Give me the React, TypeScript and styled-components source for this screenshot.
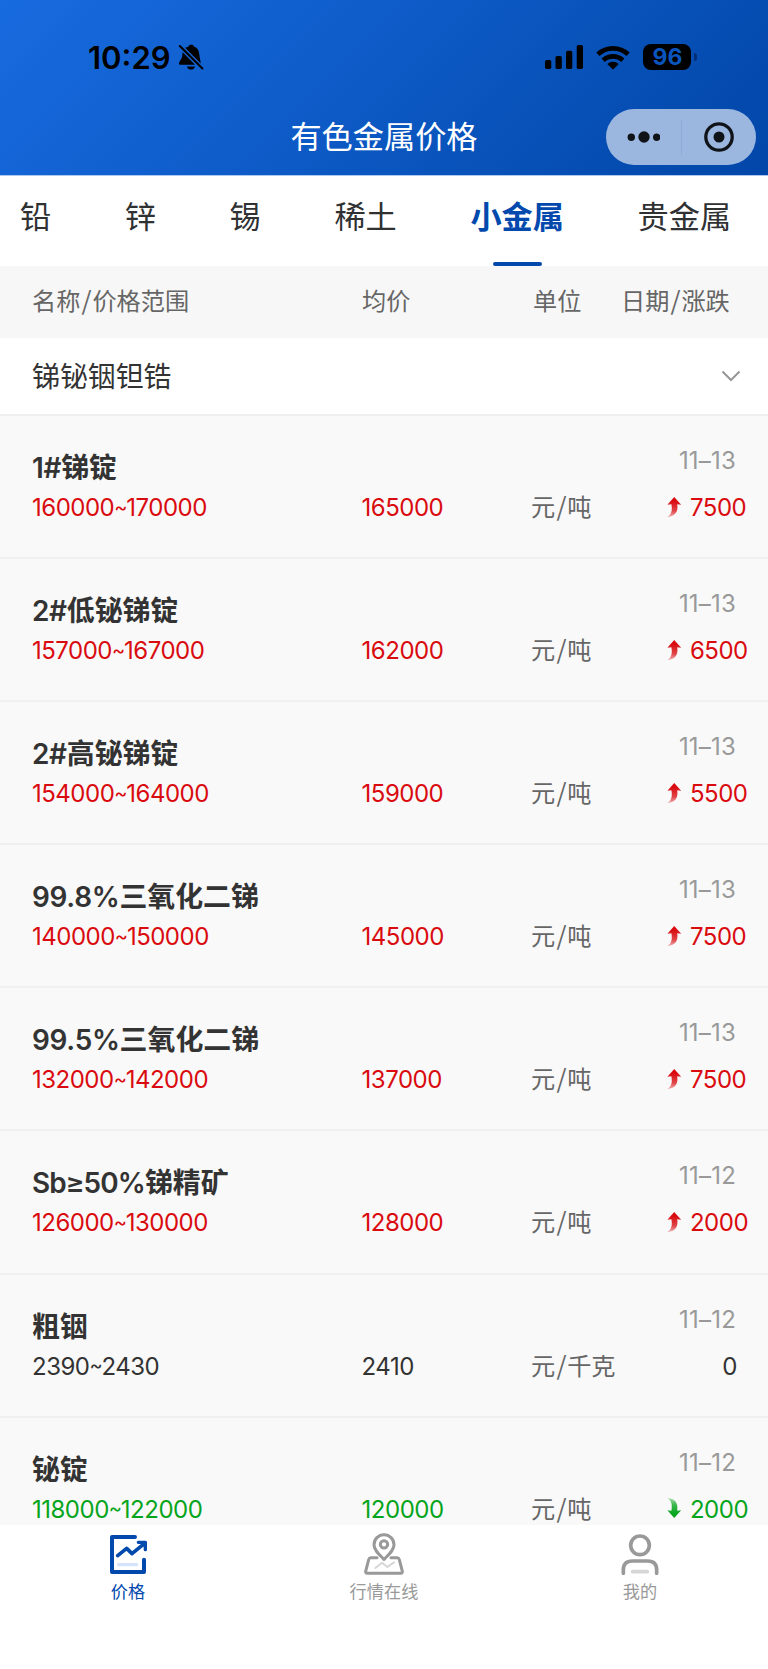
import React from "react";
import styled, { createGlobalStyle } from "styled-components";

const Global = createGlobalStyle`
  * { box-sizing: border-box; }
  html, body { margin: 0; background: #fff; }
  body {
    font-family: Inter, "Noto Sans CJK SC", sans-serif;
    color: #333;
    white-space: nowrap;
  }
  svg { display: block; flex: none; }
`;

const Screen = styled.div`
  width: 768px;
  height: 1669px;
  display: flex;
  flex-direction: column;
  overflow: hidden;
  background: #fff;
`;

const Header = styled.header`
  height: 176px;
  flex: none;
  background: linear-gradient(135deg, #186bdf 0%, #0f5dcb 40%, #0852b9 68%, #0246a8 100%);
  border-bottom: 1px solid #adc8ee;
`;

const StatusBar = styled.div`
  height: 109px;
  padding: 42px 71px 0 88px;
  display: flex;
  justify-content: space-between;
  align-items: flex-start;
  color: #000;
`;

const StatusSide = styled.div<{ $gap: number }>`
  display: flex;
  align-items: center;
  gap: ${(p) => p.$gap}px;
  height: 30px;
`;

const Clock = styled.span`
  font-size: 31px;
  font-weight: 600;
  line-height: 31px;
  width: 82px;
`;

const Battery = styled.div`
  display: flex;
  align-items: center;
  gap: 3px;
`;

const BatteryBody = styled.div`
  width: 48px;
  height: 26.5px;
  border-radius: 8px;
  background: #000;
  color: #0a55bd;
  font-size: 23px;
  font-weight: 700;
  line-height: 27px;
  text-align: center;
`;

const BatteryCap = styled.div`
  width: 2.6px;
  height: 8.5px;
  border-radius: 0 4px 4px 0;
  background: rgba(0, 20, 70, 0.55);
`;

const TitleBar = styled.div`
  height: 56px;
  display: grid;
  grid-template-columns: 1fr 200px 1fr;
  align-items: center;
  padding-right: 12px;
  padding-left: 12px;
`;

const Title = styled.h1`
  grid-column: 2;
  margin: 0;
  text-align: center;
  color: #fff;
  font-size: 31.2px;
  font-weight: 400;
  line-height: 56px;
`;

const Capsule = styled.div`
  justify-self: end;
  width: 150px;
  height: 56px;
  border-radius: 28px;
  background: #9bb7e0;
  display: flex;
  align-items: center;
`;

const CapsuleButton = styled.div`
  flex: 1;
  display: flex;
  justify-content: center;
`;

const CapsuleDivider = styled.div`
  width: 1px;
  height: 35px;
  background: #8eabd8;
`;

const Tabs = styled.nav`
  height: 90px;
  flex: none;
  display: flex;
  gap: 73.6px;
  padding-left: 20px;
`;

const Tab = styled.div<{ $active?: boolean }>`
  height: 90px;
  display: flex;
  flex-direction: column;
  align-items: center;
  justify-content: space-between;
  font-size: 31.2px;
  line-height: 82px;
  font-weight: ${(p) => (p.$active ? 700 : 400)};
  color: ${(p) => (p.$active ? "#0249ae" : "#2f3133")};
`;

const TabLine = styled.div`
  width: 49px;
  height: 3.6px;
  border-radius: 2px;
  background: #0249ae;
`;

const TableHead = styled.div`
  height: 72px;
  flex: none;
  padding-left: 32px;
  display: grid;
  grid-template-columns: 330px 171px 88px 1fr;
  background: #f7f7f7;
  color: #666;
  font-size: 24.2px;
  line-height: 72px;
`;

const Slash = styled.span`
  padding: 0 0.8px 0 1.2px;
  font-family: "Noto Sans CJK SC", sans-serif;
  font-size: 25.5px;
  line-height: 1;
`;

const Tilde = styled.span`
  margin: 0 -0.7px 0 0;
  font-size: 20px;
  vertical-align: 2.5px;
  line-height: 1;
`;

const Group = styled.div`
  height: 78px;
  flex: none;
  padding: 0 27px 0 32px;
  display: flex;
  align-items: center;
  justify-content: space-between;
  border-bottom: 2px solid #f0f0f0;
  font-size: 27.9px;
  line-height: 76px;
`;

const GroupName = styled.span`
  padding-top: 1px;
`;

const List = styled.main`
  height: 1109px;
  flex: none;
  overflow: hidden;
  background: #f9f9f9;
`;

const Row = styled.div`
  height: 143.1px;
  padding: 31px 0 0 32px;
  display: grid;
  grid-template-columns: 329.6px 169.4px 136px 1fr;
  grid-template-rows: 42px 38px;
  border-bottom: 2px solid #f0f0f0;
`;

const Name = styled.div`
  grid-column: 1 / 4;
  font-size: 27.9px;
  font-weight: 600;
  line-height: 43px;
`;

const Code = styled.span<{ $tight: boolean }>`
  letter-spacing: ${(p) => (p.$tight ? -0.9 : -0.3)}px;
`;

const DateText = styled.div`
  padding-right: 32px;
  text-align: right;
  color: #999;
  font-size: 24px;
  line-height: 27px;
  letter-spacing: 0.2px;
`;

type Trend = "up" | "down" | "flat";
const trendColor = { up: "#d90b0f", down: "#06a51c", flat: "#333" };

const Figure = styled.div<{ $trend: Trend }>`
  color: ${(p) => trendColor[p.$trend]};
  font-size: 24px;
  line-height: 38px;
  letter-spacing: -0.5px;
`;

const Unit = styled.div`
  color: #666;
  font-size: 24.2px;
  line-height: 37px;
`;

const Change = styled(Figure)`
  display: flex;
  align-items: center;
  gap: 8px;
  ${(p) => (p.$trend === "flat" ? "justify-content: flex-end; padding-right: 31px;" : "")}

  svg {
    margin-bottom: 3px;
  }
`;

const TabBar = styled.footer`
  height: 144px;
  flex: none;
  display: grid;
  grid-template-columns: repeat(3, 1fr);
  background: #fff;
`;

const TabItem = styled.div<{ $active?: boolean }>`
  display: flex;
  flex-direction: column;
  align-items: center;
  padding-top: 8px;
  font-size: 17.2px;
  line-height: 34px;
  color: ${(p) => (p.$active ? "#0249ae" : "#999")};
`;

const BellOff = () => (
  <svg width="26" height="28" viewBox="0 0 26 28">
    <g fill="#000">
      <path d="M7.2 4.8 L22.7 20.6 C22.8 17.5 21.6 15.6 21.4 12.3 C21.2 7 18.8 4.3 16 3.7 C15.8 1.2 10.7 1.2 10.4 3.7 C9.2 4 8.1 4.3 7.2 4.8 Z" />
      <path d="M4.7 9.3 C4.2 11 4.5 13.5 3.5 15.5 C2.5 17.5 1 18.6 1 20.4 C1 21.5 1.7 21.7 2.6 21.7 L17 21.7 Z" />
      <path d="M9 23.4 H17 C16.7 25.4 15.2 26.6 13 26.6 C10.8 26.6 9.3 25.4 9 23.4 Z" />
    </g>
    <path d="M1.8 3 L24.4 25.5" stroke="#000" strokeWidth="2" strokeLinecap="round" />
  </svg>
);

const Signal = () => (
  <svg width="38" height="24" viewBox="0 0 38 24">
    <rect x="0" y="15" width="6.3" height="9" rx="1.7" />
    <rect x="10.5" y="11" width="6.3" height="13" rx="1.7" />
    <rect x="21" y="5.7" width="6.3" height="18.3" rx="1.7" />
    <rect x="31.7" y="0" width="6.3" height="24" rx="1.7" />
  </svg>
);

const Wifi = () => (
  <svg width="34" height="25" viewBox="0 0 34 25">
    <g fill="none" stroke="#000" strokeWidth="4.7">
      <path d="M1.9 9.3 A22 22 0 0 1 32.1 9.3" />
      <path d="M7.2 15.2 A14.3 14.3 0 0 1 26.8 15.2" />
    </g>
    <path d="M11.3 19 A8.2 8.2 0 0 1 22.7 19 L17.7 24 Q17 24.7 16.3 24 Z" />
  </svg>
);

const Dots = () => (
  <svg width="34" height="14" viewBox="-1 0 34 14" fill="#101418">
    <circle cx="4.3" cy="7.3" r="3.7" />
    <circle cx="17" cy="7" r="5.7" />
    <circle cx="29.7" cy="7.3" r="3.7" />
  </svg>
);

const Target = () => (
  <svg width="32" height="32" viewBox="0 0 32 32">
    <circle cx="16" cy="16" r="13.2" fill="none" stroke="#101418" strokeWidth="3.3" />
    <circle cx="16" cy="16" r="5.5" fill="#101418" />
  </svg>
);

const Chevron = () => (
  <svg width="20" height="14" viewBox="0 0 20 14">
    <path d="M1.5 2.5 L10 11 L18.5 2.5" fill="none" stroke="#969696" strokeWidth="2" />
  </svg>
);

const Arrow = ({ trend }: { trend: "up" | "down" }) => (
  <svg width="15" height="20" viewBox="0 0 15 20">
    <defs>
      <linearGradient id={"fade-" + trend} x1="0" y1="0" x2="0" y2="1">
        <stop offset="0.2" stopColor={trendColor[trend]} />
        <stop offset="0.7" stopColor={trendColor[trend]} stopOpacity="0.75" />
        <stop offset="1" stopColor={trendColor[trend]} stopOpacity="0.3" />
      </linearGradient>
    </defs>
    <path
      transform={trend === "down" ? "translate(0 20) scale(1 -1)" : undefined}
      fill={`url(#fade-${trend})`}
      d="M7.2 0 L14.2 7.7 L10.2 7.2 C11.3 14 9 19.3 0.3 20 C4.5 17.5 5.5 13.5 4.4 7.2 L0.4 7.7 Z"
    />
  </svg>
);

const PriceIcon = () => (
  <svg width="42" height="42" viewBox="321 399 126 126" fill="none" stroke="#0249ae" strokeWidth="12" strokeLinecap="round" strokeLinejoin="round">
    <path d="M405 411 H336 V516 H432 V479" />
    <path d="M353 467 L380 445 L396 461 L430 433" strokeWidth="11" />
    <path d="M415 427 H436 V449" strokeWidth="10" />
    <path d="M424 427 H436 V440 Z" fill="#0249ae" strokeWidth="8" />
    <path d="M356 494 H410" stroke="#d5e3fb" strokeWidth="10" />
  </svg>
);

const MapIcon = () => (
  <svg width="42" height="42" viewBox="1089 399 126 126" fill="none" stroke="#999" strokeWidth="9" strokeLinecap="round" strokeLinejoin="round">
    <path d="M1131 473 H1112 Q1108 473 1106 479 L1097 514 Q1096 520 1102 520 H1202 Q1208 520 1207 514 L1198 479 Q1196 473 1192 473 H1173" />
    <path d="M1152 478 C1136 462 1122 450 1122 434 A30 30 0 0 1 1182 434 C1182 450 1168 462 1152 478 Z" />
    <circle cx="1152" cy="433" r="11" />
    <path d="M1126 504 L1146 488 L1162 501 L1182 487" stroke="#d6d6d6" strokeWidth="6" />
  </svg>
);

const UserIcon = () => (
  <svg width="42" height="42" viewBox="705 399 126 126" fill="none" stroke="#999" strokeWidth="11" strokeLinecap="round">
    <circle cx="768" cy="436" r="28" />
    <path d="M718 520 V510 Q718 483 745 483 H791 Q818 483 818 510 V520" />
    <path d="M746 515 H790" stroke="#d6d6d6" />
  </svg>
);

const tabs = ["铅", "锌", "锡", "稀土", "小金属", "贵金属"];

type Item = {
  code?: string;
  name: string;
  range: [string, string];
  avg: string;
  unit: string;
  date: string;
  change: string;
  trend: Trend;
};

const items: Item[] = [
  { code: "1#", name: "锑锭", range: ["160000", "170000"], avg: "165000", unit: "吨", date: "11–13", change: "7500", trend: "up" },
  { code: "2#", name: "低铋锑锭", range: ["157000", "167000"], avg: "162000", unit: "吨", date: "11–13", change: "6500", trend: "up" },
  { code: "2#", name: "高铋锑锭", range: ["154000", "164000"], avg: "159000", unit: "吨", date: "11–13", change: "5500", trend: "up" },
  { code: "99.8%", name: "三氧化二锑", range: ["140000", "150000"], avg: "145000", unit: "吨", date: "11–13", change: "7500", trend: "up" },
  { code: "99.5%", name: "三氧化二锑", range: ["132000", "142000"], avg: "137000", unit: "吨", date: "11–13", change: "7500", trend: "up" },
  { code: "Sb≥50%", name: "锑精矿", range: ["126000", "130000"], avg: "128000", unit: "吨", date: "11–12", change: "2000", trend: "up" },
  { name: "粗铟", range: ["2390", "2430"], avg: "2410", unit: "千克", date: "11–12", change: "0", trend: "flat" },
  { name: "铋锭", range: ["118000", "122000"], avg: "120000", unit: "吨", date: "11–12", change: "2000", trend: "down" },
];

export default function App() {
  return (
    <Screen>
      <Global />
      <Header>
        <StatusBar>
          <StatusSide $gap={7.5}>
            <Clock>10:29</Clock>
            <BellOff />
          </StatusSide>
          <StatusSide $gap={13.3}>
            <Signal />
            <Wifi />
            <Battery>
              <BatteryBody>96</BatteryBody>
              <BatteryCap />
            </Battery>
          </StatusSide>
        </StatusBar>
        <TitleBar>
          <Title>有色金属价格</Title>
          <Capsule>
            <CapsuleButton><Dots /></CapsuleButton>
            <CapsuleDivider />
            <CapsuleButton><Target /></CapsuleButton>
          </Capsule>
        </TitleBar>
      </Header>
      <Tabs>
        {tabs.map((t) => (
          <Tab key={t} $active={t === "小金属"}>
            {t}
            {t === "小金属" && <TabLine />}
          </Tab>
        ))}
      </Tabs>
      <TableHead>
        <span>名称<Slash>/</Slash>价格范围</span>
        <span>均价</span>
        <span>单位</span>
        <span>日期<Slash>/</Slash>涨跌</span>
      </TableHead>
      <Group>
        <GroupName>锑铋铟钽锆</GroupName>
        <Chevron />
      </Group>
      <List>
        {items.map((it) => (
          <Row key={(it.code ?? "") + it.name}>
            <Name>
              {it.code && <Code $tight={it.code.includes("≥")}>{it.code}</Code>}
              {it.name}
            </Name>
            <DateText>{it.date}</DateText>
            <Figure $trend={it.trend}>
              {it.range[0]}<Tilde>~</Tilde>{it.range[1]}
            </Figure>
            <Figure $trend={it.trend}>{it.avg}</Figure>
            <Unit>元<Slash>/</Slash>{it.unit}</Unit>
            <Change $trend={it.trend}>
              {it.trend !== "flat" && <Arrow trend={it.trend} />}
              {it.change}
            </Change>
          </Row>
        ))}
      </List>
      <TabBar>
        <TabItem $active><PriceIcon />价格</TabItem>
        <TabItem><MapIcon />行情在线</TabItem>
        <TabItem><UserIcon />我的</TabItem>
      </TabBar>
    </Screen>
  );
}
